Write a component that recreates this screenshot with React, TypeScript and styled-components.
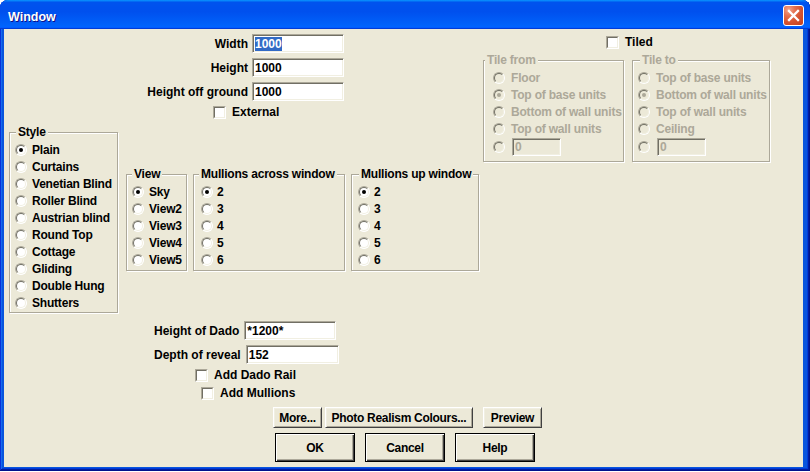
import React from 'react';
import styled, { createGlobalStyle } from 'styled-components';

const GlobalStyle = createGlobalStyle`
  *, *::before, *::after { box-sizing: border-box; }
  html, body { margin: 0; padding: 0; background: #ffffff; }
  body {
    font-family: "Liberation Sans", Arial, sans-serif;
    font-size: 12px;
    font-weight: 700;
    color: #000000;
  }
`;

const Window = styled.div`
  width: 810px;
  height: 471px;
  display: flex;
  flex-direction: column;
  overflow: hidden;
  border-radius: 8px 8px 0 0;
  background: #0855dd;
  box-shadow: inset -1px -1px #00138c, inset 1px 1px #0831d9, inset -2px -2px #001ea0,
    inset 2px 2px #166aee, inset -3px -3px #003bda, inset 3px 3px #0855dd;
`;

const TitleBar = styled.div`
  flex: none;
  height: 29px;
  display: flex;
  align-items: flex-start;
  padding: 0 6px 0 8px;
  background: linear-gradient(
    180deg,
    #0997ff 0%,
    #0053ee 8%,
    #0050ee 40%,
    #0062fa 86%,
    #0064ff 92%,
    #005bff 95%,
    #003dd7 97%,
    #003dd7 100%
  );
`;

const Title = styled.span`
  flex: 1;
  margin-top: 10px;
  font-size: 12.5px;
  line-height: 14px;
  color: #ffffff;
  text-shadow: 1px 1px #0f1089;
`;

const CloseButton = styled.div`
  flex: none;
  margin-top: 5px;
  width: 21px;
  height: 21px;
  border: 1px solid #ffffff;
  border-radius: 3px;
  display: flex;
  align-items: center;
  justify-content: center;
  background: radial-gradient(circle at 25% 20%, #f2a68e 0%, #e3704f 30%, #d55330 60%, #c4401b 100%);
`;

const Frame = styled.div`
  flex: 1;
  display: flex;
  padding: 0 7px 4px 4px;
`;

const Client = styled.div`
  flex: 1;
  display: flex;
  flex-direction: column;
  background: #ece9d8;
`;

const Upper = styled.div`
  display: flex;
  align-items: flex-start;
`;

const StyleCol = styled.div`
  flex: none;
  margin-left: 5px;
  padding-top: 103px;
`;

const MiddleCol = styled.div`
  flex: none;
  width: 357px;
  margin-left: 8px;
  padding-top: 5px;
  display: flex;
  flex-direction: column;
`;

const RightCol = styled.div`
  flex: none;
  padding-top: 7px;
  display: flex;
  flex-direction: column;
`;

const TopForm = styled.div`
  display: flex;
  flex-direction: column;
  gap: 5px;
`;

const FieldGrid = styled.div`
  display: grid;
  grid-template-columns: 122px 92px;
  column-gap: 4px;
  row-gap: 5px;
  align-items: center;
`;

const FieldLabel = styled.span`
  text-align: right;
  white-space: nowrap;
`;

const Field = styled.div<{ $w: number; $h?: number; $disabled?: boolean }>`
  flex: none;
  width: ${p => p.$w}px;
  height: ${p => p.$h ?? 19}px;
  border: 1px solid;
  border-color: #aca899 #ffffff #ffffff #aca899;
  box-shadow: inset 1px 1px #716f64, inset -1px -1px #f1efe2;
  background: ${p => (p.$disabled ? '#ece9d8' : '#ffffff')};
  color: ${p => (p.$disabled ? '#aca899' : '#000000')};
  padding-left: 2px;
  display: flex;
  align-items: center;
  line-height: 14px;
  white-space: nowrap;
  overflow: hidden;
`;

const Selected = styled.span`
  background: #316ac5;
  color: #ffffff;
  line-height: 14px;
`;

const CheckRow = styled.label<{ $indent: number }>`
  display: flex;
  align-items: center;
  gap: 6px;
  height: 13px;
  line-height: 13px;
  margin-left: ${p => p.$indent}px;
  white-space: nowrap;
`;

const Checkbox = styled.span`
  position: relative;
  flex: none;
  width: 13px;
  height: 13px;
  border: 1px solid;
  border-color: #aca899 #ffffff #ffffff #aca899;
  background: #ffffff;
  &::before {
    content: '';
    position: absolute;
    inset: 0;
    border: 1px solid;
    border-color: #716f64 #f1efe2 #f1efe2 #716f64;
  }
`;

const GroupsRow = styled.div`
  display: flex;
  gap: 6px;
  margin-top: 55px;
`;

const GroupBox = styled.div<{ $w: number; $pb: number }>`
  position: relative;
  flex: none;
  width: ${p => p.$w}px;
  border: 1px solid #aca899;
  box-shadow: inset 1px 1px #ffffff, 1px 1px #ffffff;
  padding: 8px 0 ${p => p.$pb}px;
  letter-spacing: -0.2px;
`;

const Legend = styled.span<{ $left: number; $disabled?: boolean }>`
  position: absolute;
  top: -8px;
  left: ${p => p.$left}px;
  padding: 0 2px;
  line-height: 15px;
  background: #ece9d8;
  white-space: nowrap;
  color: ${p => (p.$disabled ? '#aca899' : '#000000')};
`;

const RadioRow = styled.div<{ $indent: number; $gap?: number; $h?: number; $disabled?: boolean }>`
  display: flex;
  align-items: center;
  height: ${p => p.$h ?? 17}px;
  padding-left: ${p => p.$indent}px;
  gap: ${p => p.$gap ?? 5}px;
  white-space: nowrap;
  color: ${p => (p.$disabled ? '#aca899' : '#000000')};
`;

const Radio = styled.span<{ $checked?: boolean; $disabled?: boolean }>`
  position: relative;
  flex: none;
  width: 12px;
  height: 12px;
  border-radius: 50%;
  border: 1px solid;
  border-color: #aca899 #ffffff #ffffff #aca899;
  background: ${p => (p.$disabled ? '#ece9d8' : '#ffffff')};
  &::before {
    content: '';
    position: absolute;
    inset: 0;
    border-radius: 50%;
    border: 1px solid;
    border-color: #716f64 #f1efe2 #f1efe2 #716f64;
  }
  &::after {
    content: '';
    position: absolute;
    left: 3px;
    top: 3px;
    width: 4px;
    height: 4px;
    border-radius: 50%;
    background: ${p => (p.$disabled ? '#aca899' : '#000000')};
    display: ${p => (p.$checked ? 'block' : 'none')};
  }
`;

const LowerForm = styled.div`
  display: flex;
  flex-direction: column;
  gap: 5px;
  margin-top: 50px;
`;

const InlineField = styled.div<{ $indent: number }>`
  display: flex;
  align-items: center;
  gap: 5px;
  margin-left: ${p => p.$indent}px;
  white-space: nowrap;
`;

const TileGroups = styled.div`
  display: flex;
  gap: 8px;
  margin-top: 11px;
`;

const Footer = styled.div`
  display: flex;
  flex-direction: column;
  gap: 5px;
  margin-top: 7px;
`;

const ButtonRow = styled.div<{ $indent: number; $gap: number }>`
  display: flex;
  gap: ${p => p.$gap}px;
  margin-left: ${p => p.$indent}px;
`;

const PushButton = styled.button<{ $w: number; $h: number; $default?: boolean; $lead?: number }>`
  flex: none;
  width: ${p => p.$w}px;
  height: ${p => p.$h}px;
  margin: 0 0 0 ${p => p.$lead ?? 0}px;
  padding: 0;
  font: inherit;
  letter-spacing: -0.3px;
  color: #000000;
  background: #ece9d8;
  text-align: center;
  white-space: nowrap;
  border: 1px solid;
  border-color: ${p => (p.$default ? '#000000' : '#ffffff #404040 #404040 #ffffff')};
  box-shadow: ${p =>
    p.$default
      ? 'inset 1px 1px #ffffff, inset -1px -1px #404040, inset -2px -2px #aca899'
      : 'inset 1px 1px #f1efe2, inset -1px -1px #aca899'};
`;

const styleItems = [
  'Plain',
  'Curtains',
  'Venetian Blind',
  'Roller Blind',
  'Austrian blind',
  'Round Top',
  'Cottage',
  'Gliding',
  'Double Hung',
  'Shutters',
];
const viewItems = ['Sky', 'View2', 'View3', 'View4', 'View5'];
const countItems = ['2', '3', '4', '5', '6'];
const tileFrom = ['Floor', 'Top of base units', 'Bottom of wall units', 'Top of wall units'];
const tileTo = ['Top of base units', 'Bottom of wall units', 'Top of wall units', 'Ceiling'];

function RadioGroup(props: {
  title: string;
  items: string[];
  checked: number;
  width: number;
  legendLeft: number;
  indent: number;
  gap?: number;
  pb: number;
}) {
  return (
    <GroupBox $w={props.width} $pb={props.pb}>
      <Legend $left={props.legendLeft}>{props.title}</Legend>
      {props.items.map((it, i) => (
        <RadioRow key={it} $indent={props.indent} $gap={props.gap}>
          <Radio $checked={i === props.checked} />
          <span>{it}</span>
        </RadioRow>
      ))}
    </GroupBox>
  );
}

function TileGroup(props: {
  title: string;
  items: string[];
  checked: number;
  width: number;
  legendLeft: number;
  indent: number;
}) {
  return (
    <GroupBox $w={props.width} $pb={4}>
      <Legend $left={props.legendLeft} $disabled>
        {props.title}
      </Legend>
      {props.items.map((it, i) => (
        <RadioRow key={it} $indent={props.indent} $gap={6} $disabled>
          <Radio $checked={i === props.checked} $disabled />
          <span>{it}</span>
        </RadioRow>
      ))}
      <RadioRow $indent={props.indent} $gap={7} $h={20} $disabled>
        <Radio $disabled />
        <Field $w={49} $h={18} $disabled>
          0
        </Field>
      </RadioRow>
    </GroupBox>
  );
}

export default function App() {
  return (
    <>
      <GlobalStyle />
      <Window>
        <TitleBar>
          <Title>Window</Title>
          <CloseButton aria-label="Close">
            <svg width="19" height="19" viewBox="0 0 19 19">
              <path d="M5 5 L14 14 M14 5 L5 14" stroke="#ffffff" strokeWidth="2.3" strokeLinecap="square" />
            </svg>
          </CloseButton>
        </TitleBar>
        <Frame>
          <Client>
            <Upper>
              <StyleCol>
                <RadioGroup title="Style" items={styleItems} checked={0} width={109} legendLeft={6} indent={5} pb={1} />
              </StyleCol>
              <MiddleCol>
                <TopForm>
                  <FieldGrid>
                    <FieldLabel>Width</FieldLabel>
                    <Field $w={92}>
                      <Selected>1000</Selected>
                    </Field>
                    <FieldLabel>Height</FieldLabel>
                    <Field $w={92}>1000</Field>
                    <FieldLabel>Height off ground</FieldLabel>
                    <Field $w={92}>1000</Field>
                  </FieldGrid>
                  <CheckRow $indent={87}>
                    <Checkbox />
                    <span>External</span>
                  </CheckRow>
                </TopForm>
                <GroupsRow>
                  <RadioGroup title="View" items={viewItems} checked={0} width={61} legendLeft={5} indent={5} pb={2} />
                  <RadioGroup
                    title="Mullions across window"
                    items={countItems}
                    checked={0}
                    width={152}
                    legendLeft={5}
                    indent={7}
                    gap={4}
                    pb={2}
                  />
                  <RadioGroup
                    title="Mullions up window"
                    items={countItems}
                    checked={0}
                    width={128}
                    legendLeft={7}
                    indent={6}
                    gap={4}
                    pb={2}
                  />
                </GroupsRow>
                <LowerForm>
                  <InlineField $indent={28}>
                    <span>Height of Dado</span>
                    <Field $w={92}>*1200*</Field>
                  </InlineField>
                  <InlineField $indent={28}>
                    <span>Depth of reveal</span>
                    <Field $w={93}>152</Field>
                  </InlineField>
                  <CheckRow $indent={69}>
                    <Checkbox />
                    <span>Add Dado Rail</span>
                  </CheckRow>
                  <CheckRow $indent={75}>
                    <Checkbox />
                    <span>Add Mullions</span>
                  </CheckRow>
                </LowerForm>
              </MiddleCol>
              <RightCol>
                <CheckRow $indent={123}>
                  <Checkbox />
                  <span>Tiled</span>
                </CheckRow>
                <TileGroups>
                  <TileGroup title="Tile from" items={tileFrom} checked={1} width={141} legendLeft={1} indent={9} />
                  <TileGroup title="Tile to" items={tileTo} checked={1} width={138} legendLeft={7} indent={5} />
                </TileGroups>
              </RightCol>
            </Upper>
            <Footer>
              <ButtonRow $indent={269} $gap={3}>
                <PushButton $w={49} $h={21}>More...</PushButton>
                <PushButton $w={148} $h={21}>Photo Realism Colours...</PushButton>
                <PushButton $w={59} $h={21} $lead={7}>
                  Preview
                </PushButton>
              </ButtonRow>
              <ButtonRow $indent={271} $gap={10}>
                <PushButton $w={80} $h={29} $default>
                  OK
                </PushButton>
                <PushButton $w={80} $h={29} $default>
                  Cancel
                </PushButton>
                <PushButton $w={80} $h={29} $default>
                  Help
                </PushButton>
              </ButtonRow>
            </Footer>
          </Client>
        </Frame>
      </Window>
    </>
  );
}
